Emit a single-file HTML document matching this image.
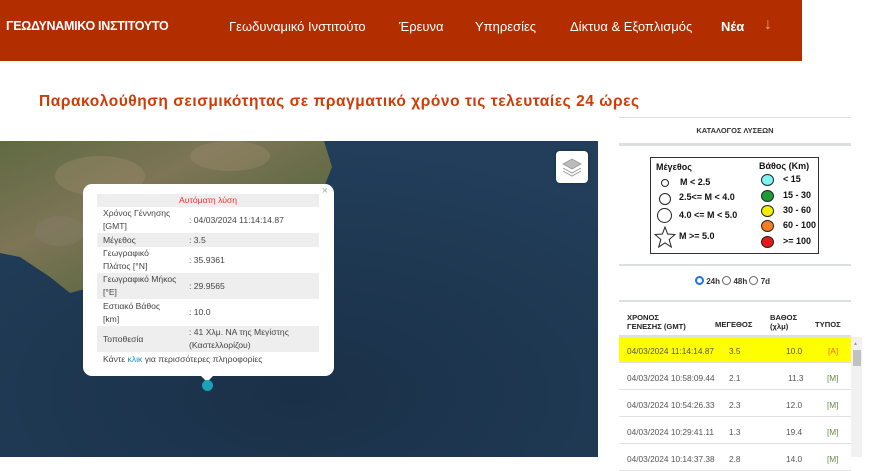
<!DOCTYPE html>
<html><head><meta charset="utf-8"><style>
*{margin:0;padding:0;box-sizing:border-box}
body{width:880px;height:457px;overflow:hidden;background:#fff;font-family:"Liberation Sans","DejaVu Sans",sans-serif;position:relative}
.hdr{position:absolute;left:0;top:0;width:802px;height:61px;background:#b22d00;color:#fff}
.hdr span{position:absolute;top:19px;font-size:13px}
.logo{left:6px;font-weight:bold;font-size:12.5px!important;letter-spacing:-0.3px}
h1{position:absolute;left:39px;top:93px;font-size:15.5px;color:#cf3b06;font-weight:bold;letter-spacing:0.55px}
.map{position:absolute;left:0;top:141px;width:598px;height:316px;overflow:hidden;background:#1c3550}
.pop{position:absolute;left:83px;top:184px;width:251px;height:192px;background:#fff;border-radius:9px;font-size:8.6px;color:#444}
.pop .x{position:absolute;right:6px;top:1px;color:#aaa;font-size:11px}
.pop table{position:absolute;left:14px;top:10px;width:222px;border-collapse:collapse}
.pop td{padding:0 6px;vertical-align:middle;line-height:13px}
.pop tr.g{background:#eee}
.tip{position:absolute;left:200px;top:375px;width:0;height:0;border-left:7px solid transparent;border-right:7px solid transparent;border-top:7px solid #fff}
.dot{position:absolute;left:202px;top:380px;width:11px;height:11px;border-radius:50%;background:#1aa3b8}
.lay{position:absolute;left:556px;top:151px;width:32px;height:32px;background:#fff;border-radius:4px;box-shadow:0 0 3px rgba(0,0,0,.3)}
.rp{position:absolute;left:619px;width:232px}
.ln{position:absolute;left:619px;width:232px;background:#dde0e3}
.cat{top:126px;text-align:center;font-size:7.5px;font-weight:bold;color:#333}
.leg{position:absolute;left:650px;top:157px;width:169px;height:97px;border:1px solid #333;font-size:9px;font-weight:bold;color:#111}
.leg div{position:absolute}
.c{border:1px solid #222;border-radius:50%}
.th{position:absolute;font-size:7.6px;color:#222;font-weight:bold;line-height:9px}
.row{position:absolute;left:619px;width:232px;height:26px;border-bottom:1px solid #e2e2e2;font-size:8.3px;color:#555}
.row span{position:absolute;top:9px}
</style></head><body>
<div class="hdr">
<span class="logo">ΓΕΩΔΥΝΑΜΙΚΟ ΙΝΣΤΙΤΟΥΤΟ</span>
<span style="left:229px">Γεωδυναμικό Ινστιτούτο</span>
<span style="left:399px">Έρευνα</span>
<span style="left:475px">Υπηρεσίες</span>
<span style="left:570px">Δίκτυα &amp; Εξοπλισμός</span>
<span style="left:721px;font-weight:bold">Νέα</span>
<span style="left:764px;color:#f0a080;font-size:16px;top:16px">↓</span>
</div>
<h1>Παρακολούθηση σεισμικότητας σε πραγματικό χρόνο τις τελευταίες 24 ώρες</h1>
<div class="map">
<svg width="598" height="316" style="position:absolute;left:0;top:0">
<defs><linearGradient id="ld" x1="0" y1="0" x2="1" y2="1"><stop offset="0" stop-color="#5f6a42"/><stop offset=".35" stop-color="#7d7556"/><stop offset=".7" stop-color="#5a6840"/><stop offset="1" stop-color="#4a5a36"/></linearGradient>
<radialGradient id="sea" cx=".5" cy=".8" r=".8"><stop offset="0" stop-color="#1a3048"/><stop offset="1" stop-color="#223e5a"/></radialGradient></defs>
<rect width="598" height="316" fill="url(#sea)"/>
<polygon fill="url(#ld)" points="0,0 324,0 332,26 316,66 305,109 294,150 260,160 100,144 70,152 50,136 20,116 0,112"/>
<ellipse cx="100" cy="35" rx="45" ry="20" fill="#a08e70" opacity=".35"/>
<ellipse cx="230" cy="15" rx="40" ry="15" fill="#a08e70" opacity=".35"/>
<ellipse cx="60" cy="90" rx="25" ry="15" fill="#8a8070" opacity=".35"/>
</svg>
</div>
<div class="lay"><svg width="32" height="32"><path d="M7 13 L16 8 L25 13 L16 18Z" fill="#bbb" stroke="#888" stroke-width=".7"/><path d="M7 17 L16 22 L25 17" fill="none" stroke="#999"/><path d="M7 20 L16 25 L25 20" fill="none" stroke="#999"/></svg></div>
<div class="pop"><span class="x">×</span>
<table>
<tr class="g"><td colspan="2" style="text-align:center;color:#f03030;height:13px">Αυτόματη λύση</td></tr>
<tr><td style="width:86px;height:26px">Χρόνος Γέννησης [GMT]</td><td>: 04/03/2024 11:14:14.87</td></tr>
<tr class="g"><td style="height:14px">Μέγεθος</td><td>: 3.5</td></tr>
<tr><td style="height:26px">Γεωγραφικό Πλάτος [°N]</td><td>: 35.9361</td></tr>
<tr class="g"><td style="height:26px">Γεωγραφικό Μήκος [°E]</td><td>: 29.9565</td></tr>
<tr><td style="height:27px">Εστιακό Βάθος [km]</td><td>: 10.0</td></tr>
<tr class="g"><td style="height:26px">Τοποθεσία</td><td>: 41 Χλμ. ΝΑ της Μεγίστης (Καστελλορίζου)</td></tr>
<tr><td colspan="2" style="height:15px">Κάντε <span style="color:#1a8fc0">κλικ</span> για περισσότερες πληροφορίες</td></tr>
</table></div>
<div class="tip"></div><div class="dot"></div>

<div class="ln" style="top:117px;height:1px"></div>
<div class="rp cat">ΚΑΤΑΛΟΓΟΣ ΛΥΣΕΩΝ</div>
<div class="ln" style="top:143px;height:3px"></div>
<div class="leg">
<div style="left:5px;top:4px">Μέγεθος</div>
<div style="left:108px;top:3px">Βάθος (Km)</div>
<div class="c" style="left:10px;top:21px;width:8px;height:8px"></div><div style="left:29px;top:19px">M &lt; 2.5</div>
<div class="c" style="left:8px;top:35px;width:12px;height:12px"></div><div style="left:28px;top:34px">2.5&lt;= M &lt; 4.0</div>
<div class="c" style="left:6px;top:50px;width:15px;height:15px"></div><div style="left:28px;top:52px">4.0 &lt;= M &lt; 5.0</div>
<svg style="position:absolute;left:3px;top:68px" width="22" height="22"><polygon points="11,1 13.6,8 21,8.5 15.2,13.5 17.3,21 11,16.8 4.7,21 6.8,13.5 1,8.5 8.4,8" fill="none" stroke="#222"/></svg>
<div style="left:28px;top:73px">M &gt;= 5.0</div>
<div class="c" style="left:110px;top:16px;width:13px;height:12px;background:#7ff4f4"></div><div style="left:132px;top:16px">&lt; 15</div>
<div class="c" style="left:110px;top:32px;width:13px;height:12px;background:#1f9a3a"></div><div style="left:132px;top:32px">15 - 30</div>
<div class="c" style="left:110px;top:47px;width:13px;height:12px;background:#f4ee00"></div><div style="left:132px;top:47px">30 - 60</div>
<div class="c" style="left:110px;top:62px;width:13px;height:12px;background:#f57f20"></div><div style="left:132px;top:62px">60 - 100</div>
<div class="c" style="left:110px;top:78px;width:13px;height:12px;background:#e21a1a"></div><div style="left:132px;top:78px">&gt;= 100</div>
</div>
<div class="ln" style="top:264px;height:2px"></div>
<div style="position:absolute;left:695px;top:276px;font-size:8px;font-weight:bold;color:#333">
<span style="display:inline-block;width:9px;height:9px;border-radius:50%;border:2.5px solid #1a73e8;vertical-align:-1px"></span> 24h <span style="display:inline-block;width:9px;height:9px;border-radius:50%;border:1px solid #666;vertical-align:-1px"></span> 48h <span style="display:inline-block;width:9px;height:9px;border-radius:50%;border:1px solid #666;vertical-align:-1px"></span> 7d</div>
<div class="ln" style="top:300px;height:2px"></div>
<div class="th" style="left:627px;top:313px">ΧΡΟΝΟΣ<br>ΓΕΝΕΣΗΣ (GMT)</div>
<div class="th" style="left:715px;top:320px">ΜΕΓΕΘΟΣ</div>
<div class="th" style="left:770px;top:313px">ΒΑΘΟΣ<br>(χλμ)</div>
<div class="th" style="left:815px;top:320px">ΤΥΠΟΣ</div>
<div class="ln" style="top:335px;height:2px"></div>
<div class="row" style="top:337px;background:#ffff00"><span style="left:8px">04/03/2024 11:14:14.87</span><span style="left:110px">3.5</span><span style="left:167px">10.0</span><span style="left:209px;color:#e63">[A]</span></div>
<div class="row" style="top:364px"><span style="left:8px">04/03/2024 10:58:09.44</span><span style="left:110px">2.1</span><span style="left:169px">11.3</span><span style="left:208px;color:#6a8a4a">[M]</span></div>
<div class="row" style="top:391px"><span style="left:8px">04/03/2024 10:54:26.33</span><span style="left:110px">2.3</span><span style="left:167px">12.0</span><span style="left:208px;color:#6a8a4a">[M]</span></div>
<div class="row" style="top:418px"><span style="left:8px">04/03/2024 10:29:41.11</span><span style="left:110px">1.3</span><span style="left:167px">19.4</span><span style="left:208px;color:#6a8a4a">[M]</span></div>
<div class="row" style="top:445px"><span style="left:8px">04/03/2024 10:14:37.38</span><span style="left:110px">2.8</span><span style="left:167px">14.0</span><span style="left:208px;color:#6a8a4a">[M]</span></div>
<div style="position:absolute;left:851px;top:337px;width:11px;height:120px;background:#f1f1f1"></div>
<div style="position:absolute;left:853px;top:350px;width:8px;height:16px;background:#c1c1c1"></div>
<div style="position:absolute;left:853px;top:341px;font-size:5px;color:#999">▲</div>
</body></html>
